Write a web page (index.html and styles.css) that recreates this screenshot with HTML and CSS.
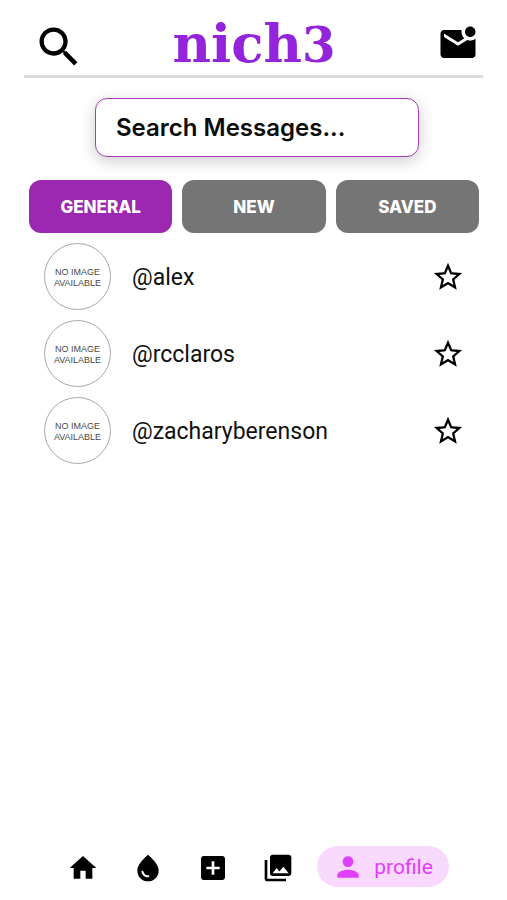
FILE: index.html
```html
<!DOCTYPE html>
<html lang="en">
<head>
<meta charset="utf-8">
<meta name="viewport" content="width=device-width, initial-scale=1">
<title>nich3 – Messages</title>
<link rel="stylesheet" href="styles.css">
</head>
<body>
<div class="app">
  <header class="topbar">
    <button class="icon-button" type="button" aria-label="Search">
      <svg class="icon-search" viewBox="0 0 24 24"><path d="M15.5 14h-.79l-.28-.27C15.41 12.59 16 11.11 16 9.5 16 5.91 13.09 3 9.5 3S3 5.91 3 9.5 5.91 16 9.5 16c1.61 0 3.09-.59 4.23-1.57l.27.28v.79l5 4.99L20.49 19l-4.99-5zm-6 0C7.01 14 5 11.99 5 9.5S7.01 5 9.5 5 14 7.01 14 9.5 11.99 14 9.5 14z"/></svg>
    </button>
    <a class="logo" href="#">nich<span class="logo-digit">3</span></a>
    <button class="icon-button" type="button" aria-label="Unread messages">
      <svg class="icon-mail" viewBox="0 0 24 24"><path d="M22 8.98V18c0 1.1-.9 2-2 2H4c-1.1 0-2-.9-2-2V6c0-1.1.9-2 2-2h10.1c-.06.32-.1.66-.1 1 0 1.48.65 2.79 1.67 3.71L12 11 4 6v2l8 5 5.3-3.32c.54.2 1.1.32 1.7.32 1.13 0 2.16-.39 3-1.02zM16 5c0 1.66 1.34 3 3 3s3-1.34 3-3-1.34-3-3-3-3 1.34-3 3z"/></svg>
    </button>
  </header>

  <main class="content">
    <input class="search" type="text" placeholder="Search Messages..." aria-label="Search messages">

    <div class="tabs">
      <button class="tab tab-active" type="button">GENERAL</button>
      <button class="tab" type="button">NEW</button>
      <button class="tab" type="button">SAVED</button>
    </div>

    <ul class="threads">
      <li class="thread">
        <span class="avatar">NO IMAGE<br>AVAILABLE</span>
        <a class="name" href="#">@alex</a>
        <button class="icon-button" type="button" aria-label="Save @alex">
          <svg class="icon-star" viewBox="0 0 24 24"><path d="M22 9.24l-7.19-.62L12 2 9.19 8.63 2 9.24l5.46 4.73L5.82 21 12 17.27 18.18 21l-1.63-7.03L22 9.24zM12 15.4l-3.76 2.27 1-4.28-3.32-2.88 4.38-.38L12 6.1l1.71 4.04 4.38.38-3.32 2.88 1 4.28L12 15.4z"/></svg>
        </button>
      </li>
      <li class="thread">
        <span class="avatar">NO IMAGE<br>AVAILABLE</span>
        <a class="name" href="#">@rcclaros</a>
        <button class="icon-button" type="button" aria-label="Save @rcclaros">
          <svg class="icon-star" viewBox="0 0 24 24"><path d="M22 9.24l-7.19-.62L12 2 9.19 8.63 2 9.24l5.46 4.73L5.82 21 12 17.27 18.18 21l-1.63-7.03L22 9.24zM12 15.4l-3.76 2.27 1-4.28-3.32-2.88 4.38-.38L12 6.1l1.71 4.04 4.38.38-3.32 2.88 1 4.28L12 15.4z"/></svg>
        </button>
      </li>
      <li class="thread">
        <span class="avatar">NO IMAGE<br>AVAILABLE</span>
        <a class="name" href="#">@zacharyberenson</a>
        <button class="icon-button" type="button" aria-label="Save @zacharyberenson">
          <svg class="icon-star" viewBox="0 0 24 24"><path d="M22 9.24l-7.19-.62L12 2 9.19 8.63 2 9.24l5.46 4.73L5.82 21 12 17.27 18.18 21l-1.63-7.03L22 9.24zM12 15.4l-3.76 2.27 1-4.28-3.32-2.88 4.38-.38L12 6.1l1.71 4.04 4.38.38-3.32 2.88 1 4.28L12 15.4z"/></svg>
        </button>
      </li>
    </ul>
  </main>

  <nav class="bottom-nav" aria-label="Main">
    <a class="nav-item" href="#" aria-label="Home">
      <svg class="icon-nav" viewBox="0 0 24 24"><path d="M10 20v-6h4v6h5v-8h3L12 3 2 12h3v8z"/></svg>
    </a>
    <a class="nav-item" href="#" aria-label="Drops">
      <svg class="icon-nav" viewBox="0 0 24 24"><path d="M12 2c-5.33 4.55-8 8.48-8 11.8 0 4.98 3.8 8.2 8 8.2s8-3.22 8-8.2c0-3.32-2.67-7.25-8-11.8zm-4.17 12c.37 0 .67.26.74.6.41 2.21 2.28 3 3.59 2.92.43-.02.79.32.79.75 0 .4-.32.73-.72.75-2.13.13-4.62-1.09-5.19-4.12-.08-.45.28-.9.79-.9z"/></svg>
    </a>
    <a class="nav-item" href="#" aria-label="Create">
      <svg class="icon-nav" viewBox="0 0 24 24"><path d="M19 3H5c-1.11 0-2 .9-2 2v14c0 1.1.89 2 2 2h14c1.1 0 2-.9 2-2V5c0-1.1-.9-2-2-2zm-2 10h-4v4h-2v-4H7v-2h4V7h2v4h4v2z"/></svg>
    </a>
    <a class="nav-item" href="#" aria-label="Collections">
      <svg class="icon-nav" viewBox="0 0 24 24"><path d="M22 16V4c0-1.1-.9-2-2-2H8c-1.1 0-2 .9-2 2v12c0 1.1.9 2 2 2h12c1.1 0 2-.9 2-2zm-11-4l2.03 2.71L16 11l4 5H8l3-4zM2 6v14c0 1.1.9 2 2 2h14v-2H4V6H2z"/></svg>
    </a>
    <a class="nav-item nav-active" href="#" aria-current="page">
      <svg class="icon-nav" viewBox="0 0 24 24"><path d="M12 12c2.21 0 4-1.79 4-4s-1.79-4-4-4-4 1.79-4 4 1.79 4 4 4zm0 2c-2.67 0-8 1.34-8 4v2h16v-2c0-2.66-5.33-4-8-4z"/></svg>
      <span>profile</span>
    </a>
  </nav>
</div>
</body>
</html>
```
FILE: styles.css
```css
* {
  box-sizing: border-box;
}

body {
  margin: 0;
  background: #fff;
  color: #111;
  font-family: Roboto, "Liberation Sans", sans-serif;
}

svg {
  display: block;
  fill: currentColor;
}

a {
  color: inherit;
  text-decoration: none;
}

.app {
  display: flex;
  flex-direction: column;
  min-height: 100vh;
  padding: 0 24px;
}

.icon-button {
  padding: 0;
  border: 0;
  background: none;
  color: #000;
  cursor: pointer;
}

.topbar {
  display: grid;
  grid-template-columns: 1fr auto 1fr;
  align-items: center;
  height: 78px;
  padding: 15px 4px 0 9px;
  border-bottom: 3px solid #dadada;
}

.topbar .icon-button {
  justify-self: start;
}

.topbar .icon-button:last-child {
  justify-self: end;
}

.icon-search {
  width: 52px;
  height: 52px;
}

.icon-mail {
  width: 42px;
  height: 42px;
  margin-bottom: 6px;
}

.logo {
  margin: 0 4px 6px 0;
  color: #9424dc;
  font-family: "DejaVu Serif", serif;
  font-size: 53px;
  font-weight: 700;
  line-height: 56px;
}

.logo-digit {
  font-size: 48px;
}

.content {
  flex: 1;
  display: flex;
  flex-direction: column;
  padding: 20px 4px 0 5px;
}

.search {
  align-self: center;
  width: 72%;
  height: 59px;
  margin-left: 6px;
  padding: 0 20px;
  border: 1px solid #a63bb8;
  border-radius: 12px;
  background: #fff;
  box-shadow: 0 4px 16px rgba(0, 0, 0, 0.2);
  color: #111;
  font: 600 24px Inter, sans-serif;
}

.search::placeholder {
  color: #0c0c0c;
  opacity: 1;
}

.tabs {
  display: grid;
  grid-template-columns: repeat(3, 1fr);
  gap: 10px;
  margin-top: 23px;
}

.tab {
  height: 53px;
  padding: 0;
  border: 0;
  border-radius: 12px;
  background: #757575;
  color: #fff;
  font: 800 17px Inter, sans-serif;
  cursor: pointer;
}

.tab-active {
  background: #9c27b0;
}

.threads {
  display: flex;
  flex-direction: column;
  gap: 10px;
  margin: 0;
  padding: 10px 14px 0 15px;
  list-style: none;
}

.thread {
  display: flex;
  align-items: center;
}

.avatar {
  display: flex;
  align-items: center;
  justify-content: center;
  width: 67px;
  height: 67px;
  padding-top: 2px;
  border: 1px solid #a8a8a8;
  border-radius: 50%;
  color: #484848;
  font: 9px/11px "Liberation Sans", sans-serif;
  text-align: center;
}

.name {
  flex: 1;
  margin-left: 21px;
  padding-top: 3px;
  font-size: 23px;
  line-height: 28px;
}

.icon-star {
  width: 34px;
  height: 34px;
}

.bottom-nav {
  display: flex;
  align-items: center;
  justify-content: center;
  gap: 9px;
  padding: 0 3px 13px 0;
}

.nav-item {
  display: flex;
  align-items: center;
  height: 41px;
  padding: 3px 12px 0;
  color: #000;
}

.nav-active {
  gap: 10px;
  margin-left: 2px;
  padding: 0 16px 0 15px;
  border-radius: 21px;
  background: #f9d9fe;
  color: #e040fb;
  font-size: 21px;
}

.icon-nav {
  width: 32px;
  height: 32px;
}
```
